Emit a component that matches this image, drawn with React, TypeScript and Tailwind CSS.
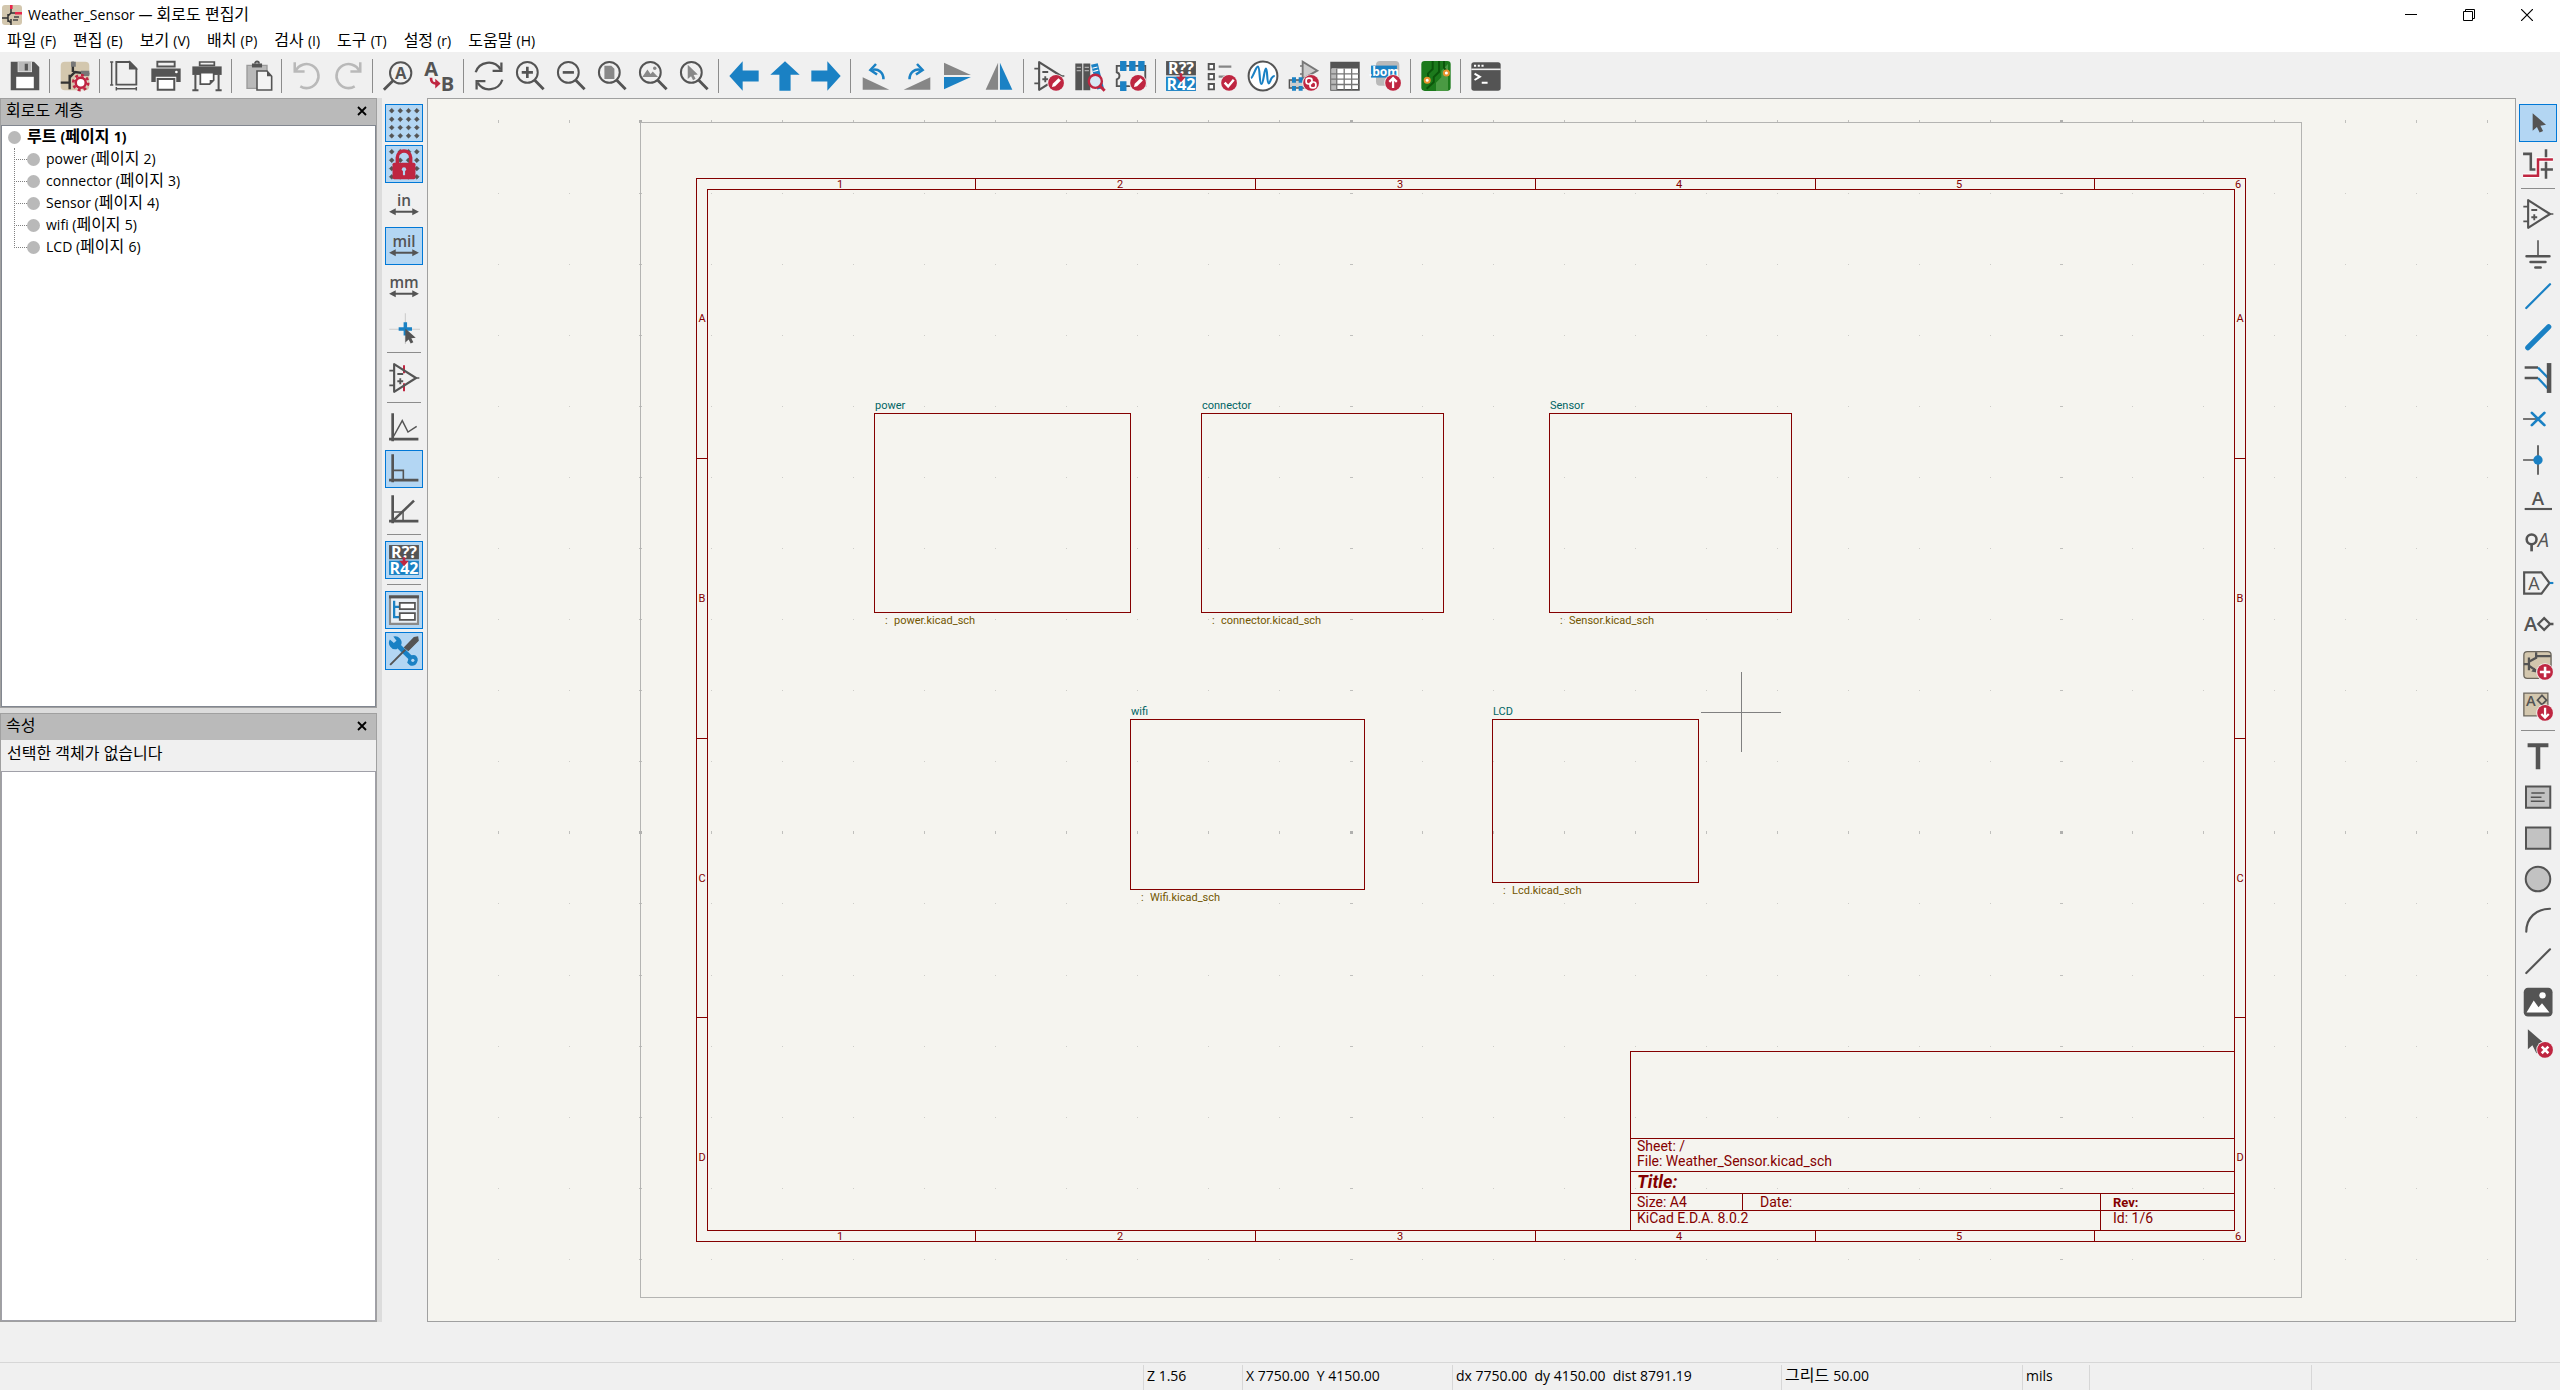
import type { ReactNode } from 'react';

const DARK = '#545454';
const BLUE = '#1a81c4';
const RED = '#bf2641';
const GRAY = '#b9b9b9';
const BEIGE = '#d3c7ae';
const LATIN = 'Open Sans, Noto Sans, sans-serif';

// red circle in the lower right corner of an icon
function Badge({ children }: { children: ReactNode }) {
  return (
    <g>
      <circle cx="17.3" cy="17.2" r="6.6" fill="#f0f0f0" />
      <circle cx="17.3" cy="17.2" r="5.9" fill={RED} />
      {children}
    </g>
  );
}

const pencil = <path d="M14.2 20.3l.6-2.4 4.3-4.3 1.8 1.8-4.3 4.3z" fill="#fff" />;

const opamp = (
  <g fill="none" stroke={DARK} strokeWidth="1.6">
    <path d="M4.6 1.6v20.8L21 12z" strokeLinejoin="round" />
    <path d="M1 6.5h3.6M1 17.5h3.6M21 12h2.5" strokeWidth="1.3" />
    <path d="M7 9h4.4M7 14.4h4.4M9.2 12.2v4.4" strokeWidth="1.4" />
  </g>
);

const lens = (
  <g fill="none" stroke={DARK}>
    <circle cx="10" cy="9.3" r="7.8" strokeWidth="1.5" />
    <path d="M15.6 15.2l6.6 6.8" strokeWidth="2.1" />
  </g>
);

const gridDots = [2.8, 9.2, 15.4, 21.6].map((y) =>
  [2.8, 9.2, 15.4, 21.6].map((x) => (
    <path key={`${x}-${y}`} d={`M${x - 1.8} ${y}l1.8-1.8 1.8 1.8-1.8 1.8z`} fill={DARK} stroke={DARK} strokeWidth=".4" />
  ))
);

const unitArrow = (
  <g fill={DARK}>
    <path d="M4 16.3h16v1.5H4z" />
    <path d="M.8 17l5-2.6v5.2zM23.2 17l-5-2.6v5.2z" />
  </g>
);

const unit = (label: string) => (
  <g>
    <text x="12" y="12.4" fontSize="11.5" fontWeight="600" textAnchor="middle" fill={DARK} fontFamily={LATIN}>{label}</text>
    {unitArrow}
  </g>
);

const annotate = (
  <g>
    <path d="M.8.8h22.4v10.7H.8z" fill={DARK} />
    <path d="M.8 12.5h22.4v10.7H.8z" fill={BLUE} />
    <text x="12" y="10.2" fontSize="12" fontWeight="700" textAnchor="middle" fill="#fff" fontFamily={LATIN}>R??</text>
    <text x="12" y="22.4" fontSize="12" fontWeight="700" textAnchor="middle" fill="#fff" fontFamily={LATIN}>R42</text>
    <path d="M11 10h2v2.6h2.6L12 16.6l-3.6-4H11z" fill={RED} />
  </g>
);

const icons: Record<string, ReactNode> = {
  save: (
    <g>
      <path d="M1.3 1.3h17.5l3.9 3.9v17.5H1.3z" fill={DARK} />
      <path d="M6.5 1.3h10.7v7.8H6.5z" fill="#f0f0f0" />
      <path d="M7 1.3h9.7v7.3H7z" fill={GRAY} />
      <path d="M11.8 2.8h2.4v5h-2.4z" fill={DARK} />
      <path d="M5.4 12.6h13.2v8.6H5.4z" fill="#fff" />
    </g>
  ),
  schematicSetup: (
    <g>
      <rect x="1.3" y="1.3" width="21.4" height="21.4" rx="3" fill={BEIGE} />
      <path d="M1.3 17h7M8 11v11M10.4 1.3V9M8 13l4-4 10.7 1.4" stroke="#333" strokeWidth="1.8" fill="none" />
      <path d="M9 1.3h3.6V5H9zM16.5 8h6.2v4h-6.2z" fill="#777" />
      <circle cx="16.3" cy="17" r="5.1" fill="#fff" />
      <circle cx="16.3" cy="17" r="3.8" fill="none" stroke={RED} strokeWidth="2" />
      <circle cx="16.3" cy="17" r="5.6" fill="none" stroke={RED} strokeWidth="2" strokeDasharray="2.2 2.2" />
    </g>
  ),
  page: (
    <g fill="none" stroke={DARK} strokeWidth="1.1">
      <path d="M5.5 1.5h10l5 5v12h-15z" strokeWidth="1.4" />
      <path d="M15.5 1.5v5h5z" fill={DARK} />
      <path d="M2 1.5v17.2M.8 1.5h2.4M.8 18.7h2.4M5.5 21.5h15M5.5 20.2v2.6M20.5 20.2v2.6" />
    </g>
  ),
  print: (
    <g>
      <path d="M5.5 1.3h13v3.6h-13z" fill="none" stroke={DARK} strokeWidth="1.4" />
      <path d="M1 6.3h22v10.2h-3.3v-4H4.3v4H1z" fill={DARK} />
      <path d="M5.8 14.2h12.4v8.2H5.8z" fill="#fff" stroke={DARK} strokeWidth="1.5" />
      <circle cx="19.8" cy="9" r="1" fill="#fff" />
    </g>
  ),
  plot: (
    <g>
      <path d="M6.5 1.5h11v2.6h-11z" fill="none" stroke={DARK} strokeWidth="1.3" />
      <path d="M1 4.8h22v6.4H1z" fill={DARK} />
      <path d="M7 9.5h10v5.6l-3 3H7z" fill="#fff" stroke={DARK} strokeWidth="1.3" />
      <path d="M17 15h-3v3z" fill={DARK} />
      <path d="M3.3 11v12M20.7 11v12M1 22.6h4.6M18.4 22.6H23" stroke={DARK} strokeWidth="1.5" />
    </g>
  ),
  paste: (
    <g>
      <path d="M4.5 4h15v17.3h-15z" fill={GRAY} stroke="#9a9a9a" strokeWidth="1" />
      <path d="M8.2 2.6h7.6v3H8.2z" fill={DARK} />
      <path d="M10.5 2.6a1.5 1.5 0 013 0" stroke={DARK} fill="none" strokeWidth="1.4" />
      <path d="M12 8.2h7.5l3.5 4v10.3H12z" fill="#f4f4f4" stroke={DARK} strokeWidth="1.2" />
      <path d="M19.5 8.2v4H23z" fill={DARK} />
    </g>
  ),
  undo: (
    <g fill="none" stroke={GRAY} strokeWidth="1.9">
      <path d="M3.5 8.2A9 9 0 117 19.8" />
      <path d="M2.8 1.6v7h7.4" />
    </g>
  ),
  redo: (
    <g fill="none" stroke={GRAY} strokeWidth="1.9">
      <path d="M20.5 8.2A9 9 0 1017 19.8" />
      <path d="M21.2 1.6v7h-7.4" />
    </g>
  ),
  find: (
    <g>
      <circle cx="14" cy="9.7" r="8" fill="none" stroke={DARK} strokeWidth="1.5" />
      <path d="M8.2 15.5l-6.8 6.8" stroke={DARK} strokeWidth="2.1" />
      <text x="14" y="14.3" fontSize="12.5" fontWeight="700" textAnchor="middle" fill={DARK} fontFamily={LATIN}>A</text>
    </g>
  ),
  replace: (
    <g>
      <text x="6.2" y="12" fontSize="15" fontWeight="700" textAnchor="middle" fill={DARK} fontFamily={LATIN}>A</text>
      <text x="18.4" y="23" fontSize="15" fontWeight="700" textAnchor="middle" fill={DARK} fontFamily={LATIN}>B</text>
      <path d="M6 13.4c0 3.4 1.2 4.3 4 4.3" stroke={RED} strokeWidth="2" fill="none" />
      <path d="M9.2 14l4 3.7-4 3.7z" fill={RED} />
    </g>
  ),
  refresh: (
    <g fill="none" stroke={DARK} strokeWidth="1.7">
      <path d="M2 9.2A10.3 10.3 0 0120.6 7M22 14.8A10.3 10.3 0 013.4 17" />
      <path d="M21.3 1.8v6.4h-6.6M2.7 22.2v-6.4h6.6" />
    </g>
  ),
  zoomIn: <g>{lens}<path d="M5.8 9.3h8.4M10 5.1v8.4" stroke={DARK} strokeWidth="2" /></g>,
  zoomOut: <g>{lens}<path d="M5.8 9.3h8.4" stroke={DARK} strokeWidth="2" /></g>,
  zoomPage: <g>{lens}<path d="M6.3 4.3h5.2l2.3 2.3v7.7H6.3z" fill="#888" /></g>,
  zoomObjects: (
    <g>
      {lens}
      <path d="M4 12.8l3.8-5.6 2.4 3.3 1.6-1.8 4 4.1z" fill="#888" />
      <circle cx="13.3" cy="6.2" r="1.3" fill="#888" />
    </g>
  ),
  zoomSelection: <g>{lens}<path d="M7.3 3.6v10.7l2.5-2.2 1.5 3 1.9-1-1.5-2.9 3.2-.3z" fill="#888" /></g>,
  left: <path d="M1 12L11 1v6.8h12v8.4H11V23z" fill={BLUE} />,
  up: <path d="M12 1l11 10h-6.8v12H7.8V11H1z" fill={BLUE} />,
  right: <path d="M23 12L13 1v6.8H1v8.4h12V23z" fill={BLUE} />,
  rotateCcw: (
    <g>
      <path d="M2 22.4V13l20 9.4z" fill="#868686" />
      <path d="M9.2 7.4c4.6-1 8.4 1.8 8.4 7" stroke={BLUE} strokeWidth="1.9" fill="none" />
      <path d="M12 3L7.8 7.5l5 3.4" stroke={BLUE} strokeWidth="1.9" fill="none" />
    </g>
  ),
  rotateCw: (
    <g>
      <path d="M22 22.4V13L2 22.4z" fill="#868686" />
      <path d="M14.8 7.4c-4.6-1-8.4 1.8-8.4 7" stroke={BLUE} strokeWidth="1.9" fill="none" />
      <path d="M12 3l4.2 4.5-5 3.4" stroke={BLUE} strokeWidth="1.9" fill="none" />
    </g>
  ),
  flipV: (
    <g>
      <path d="M1.5 2v9.3h20.2z" fill="#868686" />
      <path d="M1.5 22v-9.3h20.2z" fill={BLUE} />
    </g>
  ),
  flipH: (
    <g>
      <path d="M2 22.3h9.3V2z" fill="#868686" />
      <path d="M22 22.3h-9.3V2z" fill={BLUE} />
    </g>
  ),
  symbolEditor: <g>{opamp}<Badge>{pencil}</Badge></g>,
  library: (
    <g>
      <path d="M1 2.6h5.2v20H1zM7 2.6h5.2v20H7z" fill={DARK} />
      <path d="M2 5.5h3.2M2 8h3.2M8 5.5h3.2M8 8h3.2" stroke="#aaa" strokeWidth=".9" />
      <path d="M12.8 3.6l5-1.2 4.6 18.6-5 1.2z" fill={BLUE} />
      <path d="M13.8 6.2l3.8-1M14.4 8.6l3.8-1" stroke="#fff" strokeWidth=".8" />
      <circle cx="16" cy="16" r="4.9" fill="#d7e8f4" stroke={RED} strokeWidth="1.8" />
      <path d="M19.4 19.4l3.6 3.6" stroke={RED} strokeWidth="2.2" />
    </g>
  ),
  footprintEditor: (
    <g>
      <path d="M1.3 4.4h21.4v15.2H1.3v-5a2.8 2.8 0 000-5.4z" fill="none" stroke={DARK} strokeWidth="1.4" />
      <path d="M3.8.8h4.8v7.4H3.8zM10.6.8h4.8v7.4h-4.8zM17.4.8h4.8v7.4h-4.8zM3.8 16h4.8v7.2H3.8z" fill={BLUE} />
      <Badge>{pencil}</Badge>
    </g>
  ),
  annotate,
  erc: (
    <g>
      <path d="M2 3h4v4H2zM2 10.5h4v4H2zM2 18h4v4H2z" fill="#fff" stroke={DARK} strokeWidth="1.4" />
      <path d="M9.5 5H19M9.5 12.5h5" stroke="#868686" strokeWidth="1.6" />
      <Badge><path d="M14 17l2.6 2.8 4.2-5" stroke="#fff" strokeWidth="1.8" fill="none" /></Badge>
    </g>
  ),
  simulator: (
    <g>
      <circle cx="12" cy="12" r="10.8" fill="#fff" stroke={DARK} strokeWidth="1.5" />
      <path d="M3 13.5C4.6 13 6.6 5 8.2 5s1 13 2.6 13S12.900 6.500 14.200 6.500s.6 11 2 11 1.400-5.500 4.600-5.500" stroke={BLUE} strokeWidth="1.6" fill="none" />
    </g>
  ),
  assignFootprints: (
    <g>
      <path d="M11 1.2v13L22 8z" fill="#ccc" stroke="#777" strokeWidth="1.4" />
      <path d="M9 4.5h2M9 10.5h2" stroke="#777" strokeWidth="1.2" />
      <path d="M1 15h14v6H1z" fill="#ccc" stroke={DARK} strokeWidth="1" />
      <path d="M3 13h3v4H3zM8 13h3v4H8zM3 19.5h3v3.6H3zM8 19.5h3v3.6H8z" fill={BLUE} />
      <Badge>
        <g fill="none" stroke="#fff" strokeWidth="1.3">
          <rect x="13.6" y="13.6" width="4.4" height="4.4" rx="1.8" />
          <rect x="16.5" y="16.5" width="4.4" height="4.4" rx="1.8" />
        </g>
      </Badge>
    </g>
  ),
  table: (
    <g>
      <path d="M1.6 2h20.8v20.4H1.6z" fill="#fff" stroke={DARK} strokeWidth="1.3" />
      <path d="M1.6 2h20.8v4.4H1.6z" fill={DARK} />
      <path d="M1.6 6.4h4.2v16H1.6z" fill={GRAY} />
      <path d="M1.6 10.4h20.8M1.6 14.4h20.8M1.6 18.4h20.8M5.8 6.4v16M11.4 6.4v16M17 6.4v16" stroke="#777" strokeWidth="1" />
    </g>
  ),
  bom: (
    <g>
      <rect x="4.5" y=".8" width="17.5" height="18.5" rx="3" fill={GRAY} />
      <path d="M.8 4.2h19.4v9H.8z" fill={BLUE} />
      <text x="10.4" y="11.8" fontSize="9" fontWeight="700" textAnchor="middle" fill="#fff" fontFamily={LATIN}>.bom</text>
      <Badge><path d="M17.3 21v-7M14.5 16.4l2.8-2.8 2.8 2.8" stroke="#fff" strokeWidth="1.7" fill="none" /></Badge>
    </g>
  ),
  pcb: (
    <g>
      <rect x="1" y=".8" width="22" height="22.4" rx="2.5" fill="#1c7a1c" />
      <path d="M12 23.2V17l4-4V8l5-5v20.2z" fill="#4a9a43" />
      <path d="M9.5.8v6L6 10.2v4.5M14.3.8v8l-4 4v3.8L5 21.5M18 .8v5l3 4" stroke="#0b560b" strokeWidth="1.5" fill="none" />
      <circle cx="5.4" cy="15.2" r="1.9" fill="#fff" stroke="#e8932c" strokeWidth="1.5" />
      <circle cx="19.8" cy="9.8" r="1.9" fill="#fff" stroke="#e8932c" strokeWidth="1.5" />
    </g>
  ),
  console: (
    <g>
      <rect x="1" y="1.6" width="22" height="21.4" rx="2" fill={DARK} />
      <path d="M1 7h22" stroke="#f0f0f0" strokeWidth="1.2" />
      <path d="M3 4.3h1.6M5.8 4.3h1.6M8.6 4.3h1.6" stroke="#fff" strokeWidth="1.5" />
      <path d="M3.4 10.2l4 2.4-4 2.4M8.8 17h4.4" stroke="#fff" strokeWidth="1.5" fill="none" />
    </g>
  ),
  grid: gridDots,
  gridLock: (
    <g>
      {gridDots}
      <path d="M7 12V7.2a5 5 0 0110 0V12" stroke={RED} strokeWidth="2.6" fill="none" />
      <rect x="3.4" y="11" width="17.2" height="12.4" rx="1.2" fill={RED} />
      <circle cx="12" cy="16" r="1.6" fill="#b3d6f3" />
      <path d="M11.2 16h1.6v4.4h-1.6z" fill="#b3d6f3" />
    </g>
  ),
  inch: unit('in'),
  mil: unit('mil'),
  mm: unit('mm'),
  cursorShape: (
    <g>
      <path d="M13 1v23M1 13h23" stroke="#ccc" strokeWidth=".8" />
      <path d="M13 7.6v10M8 12.7h10" stroke={BLUE} strokeWidth="2.6" />
      <path d="M13 12.400v10.400l2.500-2.200 1.500 3 2-1-1.500-2.900 3.300-.4z" fill={DARK} />
    </g>
  ),
  hiddenPins: (
    <g>
      <path d="M12 2.5v6M12 16v6" stroke={RED} strokeWidth="1.5" />
      {opamp}
    </g>
  ),
  freeAngle: (
    <g fill="none" stroke={DARK}>
      <path d="M3.5 1v21M.8 20.4h22" strokeWidth="2" />
      <path d="M3.5 19.5l7.2-13L15 15l6.5-4.3" strokeWidth="1.1" />
    </g>
  ),
  rightAngle: (
    <g fill="none" stroke={DARK}>
      <path d="M3.5 1v21M.8 20.4h22" strokeWidth="2" />
      <path d="M4.5 13h7v7" strokeWidth="1.2" />
    </g>
  ),
  angle45: (
    <g fill="none" stroke={DARK}>
      <path d="M3.5 1v21M.8 20.4h22" strokeWidth="2" />
      <path d="M3.5 20.4L19.5 5" strokeWidth="1.9" />
      <path d="M4.5 13.5h6.8v6.5" strokeWidth="1.1" />
    </g>
  ),
  hierarchy: (
    <g fill="none">
      <path d="M1.5 1.8h21v20.6h-21z" fill="#e8eef4" stroke="#8a8a8a" strokeWidth="1.6" />
      <path d="M.8 2.2h22.4" stroke={DARK} strokeWidth="2.2" />
      <path d="M4.6 5v12.4h4M4.6 9.6h4" stroke={BLUE} strokeWidth="1.7" />
      <path d="M8.8 6.6h11.4v4.8H8.8zM8.8 14.4h11.4v5H8.8z" fill="#fff" stroke={DARK} strokeWidth="1.3" />
    </g>
  ),
  tools: (
    <g>
      <path d="M5.2 5.6L18.8 19" stroke={BLUE} strokeWidth="3.6" />
      <path d="M1.4 3.4l3 2.6 2-1.6L4 1.2a4.8 4.8 0 016 6l-3.6 3.4a4.8 4.8 0 01-5-7.2zM15.4 17.6a4.2 4.2 0 015-2.4 4.3 4.3 0 01-3.8 7.6l-2.2-2z" fill={BLUE} />
      <circle cx="18.6" cy="19" r="1.2" fill="#b3d6f3" />
      <path d="M1.6 22.4L13 11" stroke={DARK} strokeWidth="1.5" />
      <path d="M12.5 9.4L19.6 2l2.6-.4.4 2.6-7.4 7.4z" fill={DARK} stroke={DARK} />
    </g>
  ),
  select: <path d="M8 4.6v13.2l3.2-2.8 2 4.2 2.6-1.2-2-4 4.2-.6z" fill={DARK} />,
  highlightNet: (
    <g fill="none" strokeWidth="1.9">
      <path d="M.8 4.4h5.8v11.8h3.6M14 16.2h9.2M18 1v22" stroke={DARK} />
      <path d="M.8 20.8H12V8.6h11.2" stroke="#fff" strokeWidth="3.4" />
      <path d="M.8 20.8H12V8.6h11.2" stroke={RED} />
    </g>
  ),
  symbol: opamp,
  power: (
    <g stroke={DARK}>
      <path d="M12 1v12" strokeWidth="1.2" />
      <path d="M3.4 13h17.2M6.4 17.2h11.2M10 21.4h4" strokeWidth="1.9" strokeLinecap="round" />
    </g>
  ),
  wire: <path d="M3.2 21L21 3.2" stroke={BLUE} strokeWidth="1.7" strokeLinecap="round" />,
  bus: <path d="M4.4 20L20 4.4" stroke={BLUE} strokeWidth="4" strokeLinecap="round" />,
  busEntry: (
    <g>
      <path d="M2 4.2h10M2 12h10" stroke={DARK} strokeWidth="1.9" />
      <path d="M12 4.2l8 8.2M12 12l8 8.6" stroke={BLUE} strokeWidth="1.7" />
      <path d="M18.6.8h3.4v22.4h-3.4z" fill={DARK} />
    </g>
  ),
  noConnect: (
    <g>
      <path d="M.8 12H12" stroke={DARK} strokeWidth="1.2" />
      <path d="M7.4 7.4l9.4 9.2M16.8 7.4l-9.4 9.2" stroke={BLUE} strokeWidth="2" strokeLinecap="round" />
    </g>
  ),
  junction: (
    <g>
      <path d="M.8 12H12M12 1v22" stroke={DARK} strokeWidth="1.3" />
      <circle cx="12" cy="12" r="3.5" fill={BLUE} />
    </g>
  ),
  netLabel: (
    <g>
      <path d="M2 18h20.5" stroke={DARK} strokeWidth="1.6" />
      <text x="12" y="15" fontSize="14" fontWeight="600" textAnchor="middle" fill={DARK} fontFamily={LATIN}>A</text>
    </g>
  ),
  directive: (
    <g>
      <circle cx="7.2" cy="10" r="3.7" fill="none" stroke={DARK} strokeWidth="1.9" />
      <path d="M7.2 14v5" stroke={DARK} strokeWidth="2" />
      <text x="16" y="15.6" fontSize="15" fontStyle="italic" textAnchor="middle" fill={DARK} fontFamily={LATIN}>A</text>
    </g>
  ),
  globalLabel: (
    <g>
      <path d="M1.6 4h13l6 8-6 8h-13z" fill="none" stroke={DARK} strokeWidth="1.6" />
      <path d="M20.8 12h2.7" stroke={BLUE} strokeWidth="1.6" />
      <text x="9" y="17" fontSize="13.5" textAnchor="middle" fill={DARK} fontFamily={LATIN}>A</text>
    </g>
  ),
  hierLabel: (
    <g>
      <text x="6.4" y="17.4" fontSize="15" fontWeight="600" textAnchor="middle" fill={DARK} fontFamily={LATIN}>A</text>
      <path d="M16.6 7.6L21 12l-4.4 4.4-4.4-4.4zM21 12h2.6" fill="none" stroke={DARK} strokeWidth="1.7" />
    </g>
  ),
  sheet: (
    <g>
      <rect x="1.4" y="2" width="20.4" height="20" rx="2.5" fill={BEIGE} stroke="#6b665c" strokeWidth="1" />
      <path d="M1.4 11.4H5M5.2 6.4v9.6M5.2 9.6l5.4-3V2.4M10.6 5.4h11M5.2 12.6l5.4 3.6" stroke={DARK} strokeWidth="1.7" fill="none" />
      <path d="M11 17.6l-4-.8 2.4-2.8z" fill={DARK} />
      <Badge><path d="M13.4 17.2h7.8M17.3 13.3v7.8" stroke="#fff" strokeWidth="1.9" /></Badge>
    </g>
  ),
  sheetPin: (
    <g>
      <path d="M1.4 2.4h18v17h-18z" fill={BEIGE} stroke="#6b665c" strokeWidth="1" />
      <text x="6.6" y="12" fontSize="11" fontWeight="600" textAnchor="middle" fill={DARK} fontFamily={LATIN}>A</text>
      <path d="M15 4l3.4 3.6L15 11l-3.4-3.4z" fill="none" stroke={DARK} strokeWidth="1.3" />
      <Badge><path d="M17.3 13.4v7M14.5 18l2.8 2.8 2.8-2.8" stroke="#fff" strokeWidth="1.7" fill="none" /></Badge>
    </g>
  ),
  text: <path d="M4.2 2.4h15.6v3H13.7V22h-3.4V5.4H4.2z" fill={DARK} />,
  textBox: (
    <g>
      <path d="M3 4.2h18.2V20H3z" fill="#c2c2c2" stroke={DARK} strokeWidth="1.5" />
      <path d="M7 9h10M6.6 12.2h8M6.6 15.2H17" stroke={DARK} strokeWidth="1.1" />
    </g>
  ),
  rectangle: <path d="M3 4.2h18.2V20H3z" fill="#c2c2c2" stroke={DARK} strokeWidth="1.5" />,
  circle: <circle cx="12" cy="12" r="9.2" fill="#c2c2c2" stroke={DARK} strokeWidth="1.5" />,
  arc: <path d="M3.2 20.8C3.2 10.5 10.5 3.6 21 3.6" fill="none" stroke={DARK} strokeWidth="1.6" strokeLinecap="round" />,
  line: <path d="M3.2 21L21 3.2" stroke={DARK} strokeWidth="1.6" strokeLinecap="round" />,
  image: (
    <g>
      <rect x="1.3" y="1.4" width="21.6" height="21.4" rx="3.2" fill={DARK} />
      <path d="M3.4 19.8l5.4-9 3.6 5.2 2.6-3 5.6 6.8z" fill="#fff" />
      <circle cx="15.4" cy="7" r="2.4" fill="#fff" />
    </g>
  ),
  deleteTool: (
    <g>
      <path d="M4.4 1.6v15l3.4-3 3 6 4-2-2.6-5 3.6-1z" fill={DARK} />
      <Badge><path d="M14.8 14.7l5 5M19.8 14.7l-5 5" stroke="#fff" strokeWidth="1.9" /></Badge>
    </g>
  ),
};

type Tool = { icon: string; label: string; active?: boolean };

const topTools: Tool[][] = [
  [{ icon: 'save', label: '저장' }],
  [{ icon: 'schematicSetup', label: '회로도 설정' }],
  [
    { icon: 'page', label: '페이지 설정' },
    { icon: 'print', label: '인쇄' },
    { icon: 'plot', label: '플롯' },
  ],
  [{ icon: 'paste', label: '붙여넣기' }],
  [
    { icon: 'undo', label: '실행 취소' },
    { icon: 'redo', label: '다시 실행' },
  ],
  [
    { icon: 'find', label: '찾기' },
    { icon: 'replace', label: '찾아 바꾸기' },
  ],
  [
    { icon: 'refresh', label: '새로 고침' },
    { icon: 'zoomIn', label: '확대' },
    { icon: 'zoomOut', label: '축소' },
    { icon: 'zoomPage', label: '페이지에 맞춤' },
    { icon: 'zoomObjects', label: '객체에 맞춤' },
    { icon: 'zoomSelection', label: '선택 영역 확대' },
  ],
  [
    { icon: 'left', label: '이전' },
    { icon: 'up', label: '상위 시트' },
    { icon: 'right', label: '다음' },
  ],
  [
    { icon: 'rotateCcw', label: '반시계 방향 회전' },
    { icon: 'rotateCw', label: '시계 방향 회전' },
    { icon: 'flipV', label: '수직 반전' },
    { icon: 'flipH', label: '수평 반전' },
  ],
  [
    { icon: 'symbolEditor', label: '심볼 편집기' },
    { icon: 'library', label: '심볼 라이브러리' },
    { icon: 'footprintEditor', label: '풋프린트 편집기' },
  ],
  [
    { icon: 'annotate', label: '주석 달기' },
    { icon: 'erc', label: 'ERC' },
    { icon: 'simulator', label: '시뮬레이터' },
    { icon: 'assignFootprints', label: '풋프린트 할당' },
    { icon: 'table', label: '심볼 필드 표' },
    { icon: 'bom', label: 'BOM 생성' },
  ],
  [{ icon: 'pcb', label: 'PCB 편집기' }],
  [{ icon: 'console', label: '콘솔' }],
];

const leftTools: Tool[][] = [
  [
    { icon: 'grid', label: '그리드 표시', active: true },
    { icon: 'gridLock', label: '그리드 재정의', active: true },
    { icon: 'inch', label: '인치' },
    { icon: 'mil', label: '밀', active: true },
    { icon: 'mm', label: '밀리미터' },
    { icon: 'cursorShape', label: '전체 창 십자선' },
  ],
  [{ icon: 'hiddenPins', label: '숨겨진 핀 표시' }],
  [
    { icon: 'freeAngle', label: '자유 각도' },
    { icon: 'rightAngle', label: '90도', active: true },
    { icon: 'angle45', label: '45도' },
  ],
  [{ icon: 'annotate', label: '자동 주석', active: true }],
  [
    { icon: 'hierarchy', label: '계층 탐색기', active: true },
    { icon: 'tools', label: '속성 관리자', active: true },
  ],
];

const rightTools: Tool[][] = [
  [
    { icon: 'select', label: '선택', active: true },
    { icon: 'highlightNet', label: '네트 강조' },
  ],
  [
    { icon: 'symbol', label: '심볼 추가' },
    { icon: 'power', label: '전원 추가' },
    { icon: 'wire', label: '와이어' },
    { icon: 'bus', label: '버스' },
    { icon: 'busEntry', label: '버스 엔트리' },
    { icon: 'noConnect', label: '연결 없음' },
    { icon: 'junction', label: '접합' },
    { icon: 'netLabel', label: '네트 레이블' },
    { icon: 'directive', label: '네트 클래스 지시문' },
    { icon: 'globalLabel', label: '글로벌 레이블' },
    { icon: 'hierLabel', label: '계층 레이블' },
    { icon: 'sheet', label: '시트 추가' },
    { icon: 'sheetPin', label: '시트 핀 가져오기' },
  ],
  [
    { icon: 'text', label: '텍스트' },
    { icon: 'textBox', label: '텍스트 상자' },
    { icon: 'rectangle', label: '사각형' },
    { icon: 'circle', label: '원' },
    { icon: 'arc', label: '호' },
    { icon: 'line', label: '선' },
    { icon: 'image', label: '이미지' },
    { icon: 'deleteTool', label: '삭제' },
  ],
];

const menus = ['파일 (F)', '편집 (E)', '보기 (V)', '배치 (P)', '검사 (I)', '도구 (T)', '설정 (r)', '도움말 (H)'];

const pages = ['power (페이지 2)', 'connector (페이지 3)', 'Sensor (페이지 4)', 'wifi (페이지 5)', 'LCD (페이지 6)'];

const sheets = [
  { name: 'power', file: 'power.kicad_sch', x: 874, y: 413, w: 256, h: 199 },
  { name: 'connector', file: 'connector.kicad_sch', x: 1201, y: 413, w: 242, h: 199 },
  { name: 'Sensor', file: 'Sensor.kicad_sch', x: 1549, y: 413, w: 242, h: 199 },
  { name: 'wifi', file: 'Wifi.kicad_sch', x: 1130, y: 719, w: 234, h: 170 },
  { name: 'LCD', file: 'Lcd.kicad_sch', x: 1492, y: 719, w: 206, h: 163 },
];

// Hangul runs are set one step larger than the Latin text around them
function Label({ text }: { text: string }) {
  return (
    <span className="whitespace-pre">
      {text.split(/([가-힣 ]*[가-힣][가-힣 ]*)/).map((part, i) =>
        i % 2 ? <span key={i} className="text-[16px] leading-none">{part}</span> : part
      )}
    </span>
  );
}

function ToolButton({ tool }: { tool: Tool }) {
  return (
    <button
      type="button"
      aria-label={tool.label}
      aria-pressed={tool.active}
      className={`flex size-[38px] shrink-0 items-center justify-center border ${
        tool.active ? 'border-[#0078d7] bg-[#b3d6f3]' : 'border-transparent'
      }`}
    >
      <svg viewBox="0 0 24 24" className="size-8 overflow-visible" aria-hidden="true">{icons[tool.icon]}</svg>
    </button>
  );
}

function SideToolbar({ groups, label, className }: { groups: Tool[][]; label: string; className: string }) {
  return (
    <div role="toolbar" aria-label={label} className={`flex shrink-0 flex-col gap-[3px] pt-[6px] pl-[3px] ${className}`}>
      {groups.map((group, i) => (
        <div key={i} className="flex flex-col gap-[3px]">
          {i > 0 && <div className="mt-[2px] mb-[3px] ml-[2px] h-px w-[34px] bg-[#8c8c8c]" />}
          {group.map((tool) => <ToolButton key={tool.icon} tool={tool} />)}
        </div>
      ))}
    </div>
  );
}

function PaneHeader({ title }: { title: string }) {
  return (
    <div className="flex h-[26px] shrink-0 items-center justify-between bg-[#bababa] pr-[9px] pb-[2px] pl-[5px]">
      <h2><Label text={title} /></h2>
      <button type="button" aria-label="닫기" className="p-0">
        <svg viewBox="0 0 10 10" className="size-[10px]" aria-hidden="true">
          <path d="M1 1l8 8M9 1l-8 8" stroke="#000" strokeWidth="1.8" />
        </svg>
      </button>
    </div>
  );
}

function GridDots() {
  const dots: ReactNode[] = [];
  for (let i = -2; i <= 26; i++) {
    for (let j = 0; j <= 16; j++) {
      const majorX = i % 10 === 0;
      const majorY = j % 10 === 0;
      const x = Math.round(640 + 71.05 * i);
      const y = Math.round(121.4 + 71.1 * j);
      dots.push(
        <rect
          key={`${i},${j}`}
          x={majorX ? x - 1 : x}
          y={majorY ? y - 1 : y}
          width={majorX ? 3 : 1}
          height={majorY ? 3 : 1}
          fill={majorX && majorY ? '#b0b0ae' : majorX || majorY ? '#c0c0bd' : '#cdccc8'}
        />
      );
    }
  }
  return <g>{dots}</g>;
}

function Schematic() {
  const columns = [975, 1255, 1535, 1815, 2094];
  const rows = [458, 738, 1017];
  const numbers = [840, 1120, 1400, 1679, 1959, 2238];
  const letters = [322, 602, 882, 1161];
  return (
    <svg viewBox="428 99 2087 1222" className="block h-full w-full font-[Roboto,sans-serif]" role="img" aria-label="Weather_Sensor">
      <g shapeRendering="crispEdges">
        <GridDots />
        <rect x="640.5" y="122.5" width="1661" height="1175" fill="none" stroke="#b4b4b2" />
        <g fill="none" stroke="#840000">
          <rect x="696.5" y="178.5" width="1549" height="1063" />
          <rect x="707.5" y="189.5" width="1527" height="1041" />
          {columns.map((x) => <path key={x} d={`M${x + 0.5} 178v11M${x + 0.5} 1230v11`} />)}
          {rows.map((y) => <path key={y} d={`M696 ${y + 0.5}h11M2234 ${y + 0.5}h11`} />)}
          <path d="M1630.5 1230V1051.5H2234M1630 1138.5H2234M1630 1171.5H2234M1630 1193.5H2234M1630 1210.5H2234M1742.5 1193v17M2100.5 1193v37" />
          {sheets.map((s) => <rect key={s.name} x={s.x + 0.5} y={s.y + 0.5} width={s.w} height={s.h} />)}
        </g>
        <path d="M1741.5 672v80M1701 712.5h80" stroke="#808080" />
      </g>

      <g fill="#840000" fontSize="11" textAnchor="middle">
        {numbers.map((x, i) => (
          <g key={x}>
            <text x={x} y="188">{i + 1}</text>
            <text x={x} y="1240">{i + 1}</text>
          </g>
        ))}
        {letters.map((y, i) => (
          <g key={y}>
            <text x="702" y={y}>{'ABCD'[i]}</text>
            <text x="2240" y={y}>{'ABCD'[i]}</text>
          </g>
        ))}
      </g>

      <g fontSize="11">
        {sheets.map((s) => (
          <g key={s.name}>
            <text x={s.x + 1} y={s.y - 4} fill="#006464">{s.name}</text>
            <text x={s.x + 11} y={s.y + s.h + 12} fill="#725600">
              : <tspan x={s.x + 20}>{s.file}</tspan>
            </text>
          </g>
        ))}
      </g>

      <g fill="#840000" fontSize="14">
        <text x="1637" y="1151">Sheet: /</text>
        <text x="1637" y="1166">File: Weather_Sensor.kicad_sch</text>
        <text x="1637" y="1188" fontSize="18" fontWeight="700" fontStyle="italic">Title:</text>
        <text x="1637" y="1207">Size: A4</text>
        <text x="1760" y="1207">Date:</text>
        <text x="2113" y="1207" fontSize="13" fontWeight="700">Rev:</text>
        <text x="1637" y="1223">KiCad E.D.A. 8.0.2</text>
        <text x="2113" y="1223">Id: 1/6</text>
      </g>
    </svg>
  );
}

export default function App() {
  return (
    <div className="flex h-screen flex-col overflow-hidden bg-[#f0f0f0] font-['Open_Sans','Noto_Sans_CJK_KR',sans-serif] text-[14px] leading-[22px] text-black">
      <header className="bg-white">
        <div className="flex h-[29px] items-center pr-[4px] pl-[2px]">
          <svg viewBox="0 0 20 20" className="size-5" aria-hidden="true">
            <rect width="20" height="20" rx="3" fill={BEIGE} />
            <path d="M9 0v8M9 14v6M0 13h6M6 9v8M6 11l3-3h4M6 15l3 3" stroke="#333" strokeWidth="1.5" fill="none" />
            <path d="M8 0h2.6v4H8zM13 7h7v2.4h-7z" fill="#e8274b" />
            <path d="M12 12h5M11 15h5" stroke="#444" strokeWidth="1.4" />
          </svg>
          <h1 className="ml-[6px] flex-1"><Label text="Weather_Sensor — 회로도 편집기" /></h1>
          <button type="button" aria-label="최소화" className="flex w-[58px] justify-center">
            <svg viewBox="0 0 12 12" className="size-3" aria-hidden="true"><path d="M0 5.5h12" stroke="#000" /></svg>
          </button>
          <button type="button" aria-label="이전 크기로 복원" className="flex w-[58px] justify-center">
            <svg viewBox="0 0 12 12" className="size-3" aria-hidden="true">
              <path d="M.5 2.5h9v9h-9zM2.5 2.5v-2h9v9h-2" stroke="#000" fill="none" />
            </svg>
          </button>
          <button type="button" aria-label="닫기" className="flex w-[58px] justify-center">
            <svg viewBox="0 0 12 12" className="size-3" aria-hidden="true"><path d="M0 0l12 12M12 0L0 12" stroke="#000" strokeWidth="1.2" /></svg>
          </button>
        </div>
        <nav className="flex h-[23px] items-center gap-[17px] pl-[7px]">
          {menus.map((menu) => (
            <button key={menu} type="button"><Label text={menu} /></button>
          ))}
        </nav>
      </header>

      <div role="toolbar" aria-label="도구 모음" className="flex h-[46px] shrink-0 items-center gap-[3px] pt-[2px] pl-[6px]">
        {topTools.map((group, i) => (
          <div key={i} className="flex items-center gap-[3px]">
            {i > 0 && <div className="mr-[3px] ml-[2px] h-[34px] w-px bg-[#8c8c8c]" />}
            {group.map((tool) => <ToolButton key={tool.icon} tool={tool} />)}
          </div>
        ))}
      </div>

      <main className="flex min-h-0 flex-1">
        <aside className="flex w-[382px] shrink-0 flex-col gap-[5px] bg-[#dcdcdc] pr-[5px]">
          <section className="flex flex-1 basis-0 flex-col border border-[#a0a0a0]">
            <PaneHeader title="회로도 계층" />
            <div className="flex-1 border border-[#828790] bg-white">
              <div className="flex h-[22px] items-center gap-[6px] pl-[6px] font-bold">
                <span className="size-[13px] rounded-full bg-[#b9b9b9]" />
                <Label text="루트 (페이지 1)" />
              </div>
              <ul className="relative ml-[12px]">
                <li aria-hidden="true" className="absolute top-0 bottom-[10px] left-0 border-l border-dotted border-[#808080]" />
                {pages.map((page) => (
                  <li key={page} className="flex h-[22px] items-center">
                    <span className="w-[13px] border-t border-dotted border-[#808080]" />
                    <span className="mr-[6px] size-[13px] rounded-full bg-[#b9b9b9]" />
                    <Label text={page} />
                  </li>
                ))}
              </ul>
            </div>
          </section>
          <section className="flex flex-1 basis-0 flex-col border border-[#a0a0a0]">
            <PaneHeader title="속성" />
            <p className="h-[31px] bg-[#f0f0f0] pt-[3px] pl-[6px]"><Label text="선택한 객체가 없습니다" /></p>
            <div className="flex-1 border border-[#a0a0a8] bg-white" />
          </section>
        </aside>

        <SideToolbar groups={leftTools} label="보기 옵션" className="w-[45px]" />

        <div className="min-w-0 flex-1 border border-[#a0a0a0] bg-[#f5f4ef]">
          <Schematic />
        </div>

        <SideToolbar groups={rightTools} label="그리기 도구" className="w-[44px]" />
      </main>

      <footer className="shrink-0">
        <div className="h-[40px]" />
        <div className="flex h-[28px] items-center border-t border-[#d7d7d7] pt-px">
          <div className="flex-1" />
          <div className="h-[25px] w-[99px] border-l border-[#d7d7d7] pl-[3px]"><Label text="Z 1.56" /></div>
          <div className="h-[25px] w-[210px] border-l border-[#d7d7d7] pl-[3px]"><Label text="X 7750.00  Y 4150.00" /></div>
          <div className="h-[25px] w-[329px] border-l border-[#d7d7d7] pl-[3px]"><Label text="dx 7750.00  dy 4150.00  dist 8791.19" /></div>
          <div className="h-[25px] w-[241px] border-l border-[#d7d7d7] pl-[3px]"><Label text="그리드 50.00" /></div>
          <div className="h-[25px] w-[67px] border-l border-[#d7d7d7] pl-[3px]"><Label text="mils" /></div>
          <div className="h-[25px] w-[222px] border-l border-[#d7d7d7]" />
          <div className="h-[25px] w-[249px] border-l border-[#d7d7d7]" />
        </div>
      </footer>
    </div>
  );
}
